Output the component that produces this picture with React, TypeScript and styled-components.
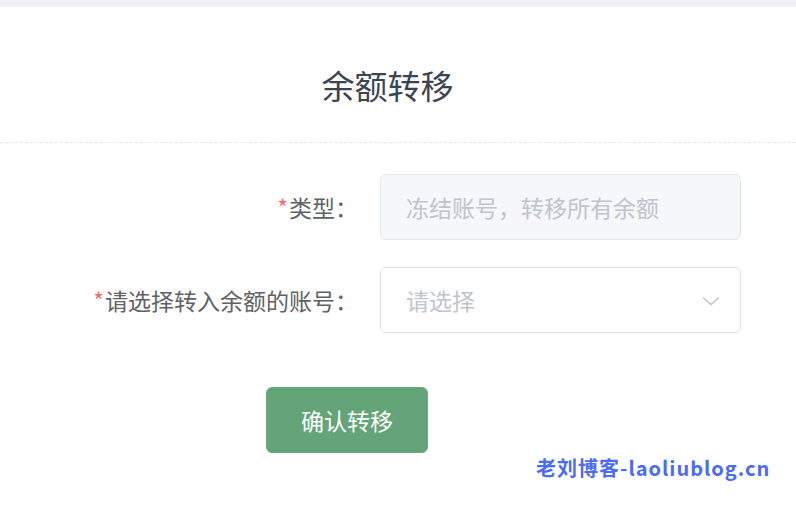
import React from "react";
import styled, { createGlobalStyle } from "styled-components";

const Global = createGlobalStyle`
  html, body { margin: 0; padding: 0; background: #ffffff; }
  body { font-family: "Noto Sans CJK SC", "Noto Sans", sans-serif; }
  * { box-sizing: border-box; }
`;

const Page = styled.div`
  position: relative;
  width: 796px;
  height: 506px;
  overflow: hidden;
  background: #ffffff;
`;

const TopBand = styled.div`
  height: 7px;
  background: #f0f1f5;
`;

const Header = styled.div`
  padding: 58px 0 37px;
  border-bottom: 1px dashed #e6e6e6;
  display: flex;
  justify-content: center;
`;

const Title = styled.h1`
  margin: 0;
  font-size: 33px;
  line-height: 40px;
  font-weight: 400;
  color: #3a4454;
  padding-right: 21px;
`;

const Form = styled.div`
  padding-top: 31px;
  display: flex;
  flex-direction: column;
`;

const Row = styled.div<{ $gap?: number }>`
  display: grid;
  grid-template-columns: 358px 361px;
  column-gap: 22px;
  align-items: center;
  margin-bottom: ${(p) => p.$gap ?? 27}px;
`;

const Label = styled.label`
  text-align: right;
  font-size: 23px;
  line-height: 30px;
  color: #5f6266;
  white-space: nowrap;
`;

const Star = styled.span`
  color: #f56c6c;
  margin-right: 1px;
`;

const Field = styled.div<{ $disabled?: boolean }>`
  height: 66px;
  border: 1px solid ${(p) => (p.$disabled ? "#e4e7ed" : "#dcdfe6")};
  background: ${(p) => (p.$disabled ? "#f5f7fa" : "#ffffff")};
  border-radius: 6px;
  padding: 0 20px 0 25px;
  display: flex;
  align-items: center;
  justify-content: space-between;
`;

const Placeholder = styled.span`
  font-size: 23px;
  color: #c0c4cc;
  white-space: nowrap;
`;

const Chevron = styled.svg`
  width: 18px;
  height: 10px;
  margin-top: 2px;
`;

const ButtonRow = styled.div`
  padding-left: 266px;
  padding-top: 54px;
`;

const Button = styled.button`
  width: 162px;
  height: 66px;
  border: 1px solid #6aa97f;
  border-radius: 6px;
  background: #63a579;
  color: #ffffff;
  font-family: "Noto Sans CJK SC", "Noto Sans", sans-serif;
  font-size: 23px;
  cursor: pointer;
  padding: 0;
`;

const Watermark = styled.div`
  position: absolute;
  left: 536px;
  top: 453px;
  font-family: "Noto Sans CJK SC", "Noto Sans", sans-serif;
  font-weight: 700;
  font-size: 20px;
  line-height: 30px;
  letter-spacing: 1px;
  color: #4a6cf3;
  white-space: nowrap;
`;

export default function App() {
  return (
    <Page>
      <Global />
      <TopBand />
      <Header>
        <Title>余额转移</Title>
      </Header>
      <Form>
        <Row>
          <Label>
            <Star>*</Star>类型：
          </Label>
          <Field $disabled>
            <Placeholder>冻结账号，转移所有余额</Placeholder>
          </Field>
        </Row>
        <Row $gap={0}>
          <Label>
            <Star>*</Star>请选择转入余额的账号：
          </Label>
          <Field>
            <Placeholder>请选择</Placeholder>
            <Chevron viewBox="0 0 18 10">
              <polyline
                points="1,1.5 9,8.5 17,1.5"
                fill="none"
                stroke="#c0c4cc"
                strokeWidth="1.5"
              />
            </Chevron>
          </Field>
        </Row>
        <ButtonRow>
          <Button>确认转移</Button>
        </ButtonRow>
      </Form>
      <Watermark>老刘博客-laoliublog.cn</Watermark>
    </Page>
  );
}
